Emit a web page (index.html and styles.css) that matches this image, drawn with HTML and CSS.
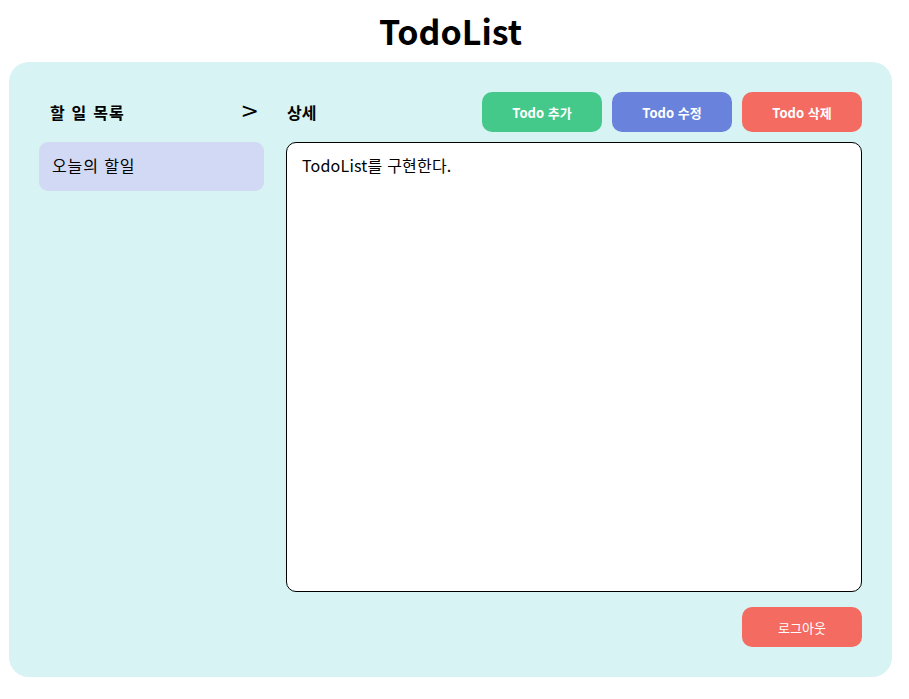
FILE: index.html
```html
<!DOCTYPE html>
<html lang="ko">
<head>
<meta charset="utf-8">
<title>TodoList</title>
<link rel="stylesheet" href="styles.css">
</head>
<body>
<h1 class="title">TodoList</h1>
<main class="board">
  <section class="list-col">
    <div class="list-head">
      <span class="list-title">할 일 목록</span>
      <span class="chev">&gt;</span>
    </div>
    <div class="todo-item">오늘의 할일</div>
  </section>
  <section class="detail-col">
    <div class="detail-head">
      <span class="detail-title">상세</span>
      <div class="actions">
        <button class="btn green">Todo 추가</button>
        <button class="btn blue">Todo 수정</button>
        <button class="btn red">Todo 삭제</button>
      </div>
    </div>
    <div class="detail-box">TodoList를 구현한다.</div>
    <div class="foot">
      <button class="btn red light">로그아웃</button>
    </div>
  </section>
</main>
</body>
</html>
```
FILE: styles.css
```css
* { box-sizing: border-box; }
body {
  margin: 0;
  font-family: "Noto Sans CJK KR", "Noto Sans", sans-serif;
  color: #000;
  background: #fff;
}
.title {
  margin: 0 0 0 9px;
  width: 883px;
  height: 62px;
  display: flex;
  align-items: center;
  justify-content: center;
  font-size: 34px;
  font-weight: 700;
  padding-bottom: 2px;
}
.board {
  margin-left: 9px;
  width: 883px;
  height: 615px;
  background: #d7f3f3;
  border-radius: 20px;
  padding: 30px;
  display: flex;
  gap: 22px;
}
.list-col {
  width: 225px;
  display: flex;
  flex-direction: column;
  gap: 10px;
}
.list-head {
  height: 40px;
  display: flex;
  align-items: center;
  justify-content: space-between;
  padding: 0 5px 0 11px;
}
.list-title {
  font-size: 16px;
  font-weight: 700;
  letter-spacing: 1.2px;
}
.chev {
  font-size: 22px;
  font-family: "DejaVu Sans", sans-serif;
  margin-top: -4px;
}
.todo-item {
  height: 49px;
  background: #d1d9f4;
  border-radius: 9px;
  display: flex;
  align-items: center;
  padding: 0 0 3px 13px;
  font-size: 16px;
  letter-spacing: 0.9px;
}
.detail-col {
  flex: 1;
  display: flex;
  flex-direction: column;
}
.detail-head {
  height: 40px;
  display: flex;
  align-items: center;
  justify-content: space-between;
  padding-left: 1px;
}
.detail-title {
  font-size: 16px;
  font-weight: 700;
}
.actions {
  display: flex;
  gap: 10px;
}
.btn {
  width: 120px;
  height: 40px;
  border: none;
  border-radius: 10px;
  color: #fff;
  font-family: "Noto Sans CJK KR", "Noto Sans", sans-serif;
  font-size: 13px;
  font-weight: 700;
  padding: 0;
}
.btn.light { font-weight: 400; }
.green { background: #45c98a; }
.blue { background: #6983dc; }
.red { background: #f46b62; }
.detail-box {
  margin-top: 10px;
  height: 450px;
  background: #fff;
  border: 1px solid #000;
  border-radius: 10px;
  padding: 10px 15px;
  font-size: 16px;
  letter-spacing: 0.2px;
}
.foot {
  margin-top: 15px;
  display: flex;
  justify-content: flex-end;
}
```
